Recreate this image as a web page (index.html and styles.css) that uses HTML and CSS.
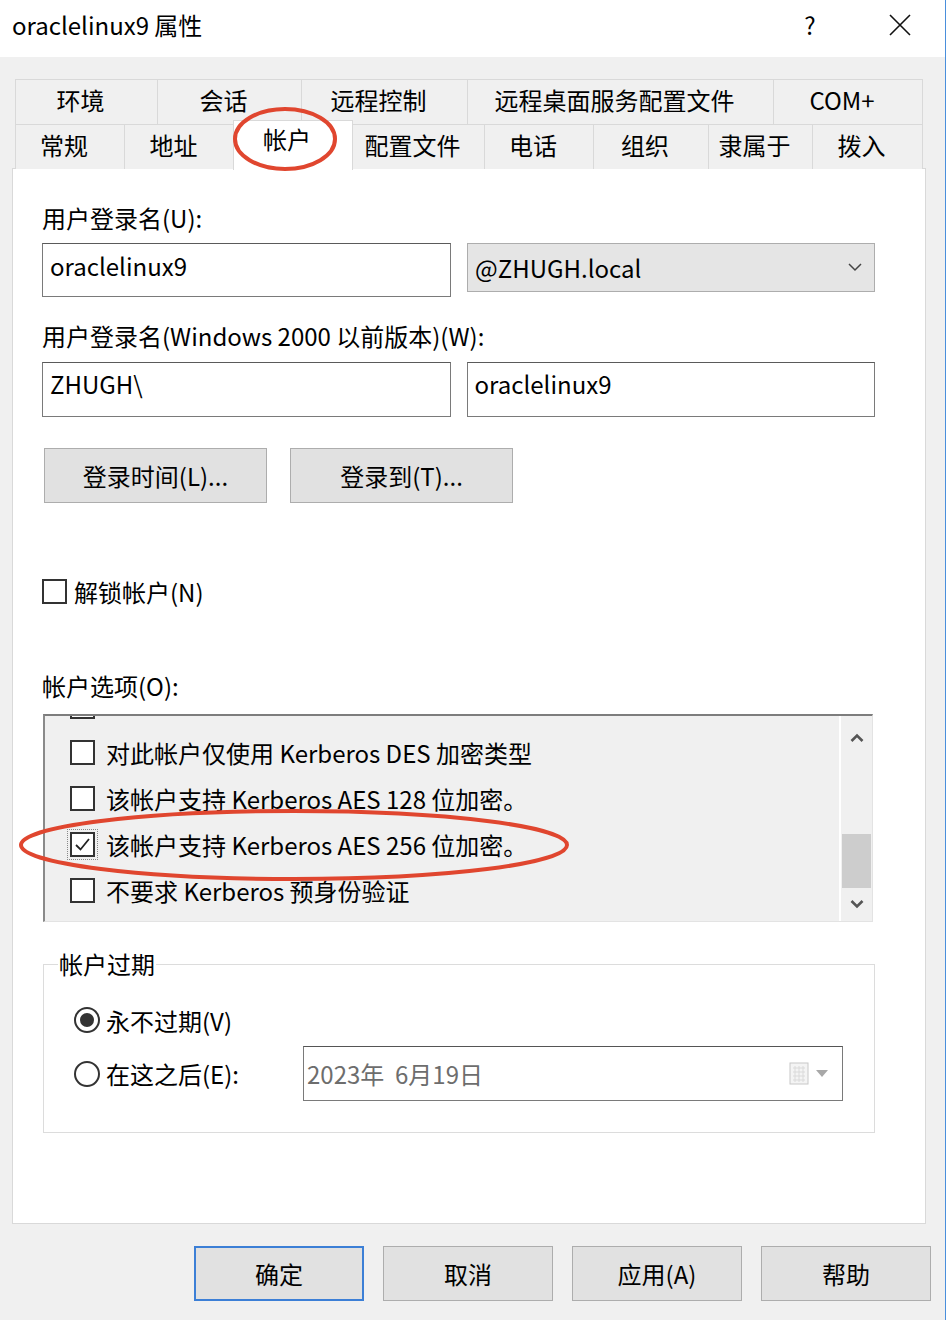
FILE: index.html
```html
<!DOCTYPE html>
<html lang="zh-CN">
<head>
  <meta charset="UTF-8" />
  <title>oraclelinux9 属性</title>
  <link rel="stylesheet" href="styles.css">
</head>
<body>
  <div class="window">
    <div class="titlebar">
      <span class="title">oraclelinux9 属性</span>
      <span class="cap-btn help">?</span>
      <span class="cap-btn">
        <svg width="22" height="22" viewBox="0 0 22 22"><path d="M1 1L21 21M21 1L1 21" stroke="#111" stroke-width="1.6"/></svg>
      </span>
    </div>

    <div class="client">
      <div class="tabs">
        <div class="tab-row row1">
          <div class="tab">环境</div>
          <div class="tab">会话</div>
          <div class="tab">远程控制</div>
          <div class="tab">远程桌面服务配置文件</div>
          <div class="tab">COM+</div>
        </div>
        <div class="tab-row row2">
          <div class="tab">常规</div>
          <div class="tab">地址</div>
          <div class="tab active">帐户</div>
          <div class="tab">配置文件</div>
          <div class="tab">电话</div>
          <div class="tab">组织</div>
          <div class="tab">隶属于</div>
          <div class="tab">拨入</div>
        </div>
      </div>

      <div class="panel">
        <div class="label first">用户登录名(U):</div>
        <div class="field-row">
          <input class="text" type="text" value="oraclelinux9" readonly />
          <div class="combo">
            <span>@ZHUGH.local</span>
            <svg width="14" height="9" viewBox="0 0 14 9"><path d="M1 1L7 7L13 1" fill="none" stroke="#444" stroke-width="1.5"/></svg>
          </div>
        </div>

        <div class="label second">用户登录名(Windows 2000 以前版本)(W):</div>
        <div class="field-row row-b">
          <input class="text" type="text" value="ZHUGH\" readonly />
          <input class="text" type="text" value="oraclelinux9" readonly />
        </div>

        <div class="btn-row">
          <button class="btn wide">登录时间(L)...</button>
          <button class="btn wide">登录到(T)...</button>
        </div>

        <div class="check-row">
          <span class="box"></span>
          <span class="check-text">解锁帐户(N)</span>
        </div>

        <div class="label section">帐户选项(O):</div>
        <div class="listbox">
          <div class="options">
            <div class="opt ghost"><span class="box"></span></div>
            <div class="opt"><span class="box"></span><span>对此帐户仅使用 Kerberos DES 加密类型</span></div>
            <div class="opt"><span class="box"></span><span>该帐户支持 Kerberos AES 128 位加密。</span></div>
            <div class="opt"><span class="box checked focus">
              <svg width="19" height="19" viewBox="0 0 19 19"><path d="M3 10L7.5 14.5L16 4" fill="none" stroke="#222" stroke-width="1.8"/></svg>
            </span><span>该帐户支持 Kerberos AES 256 位加密。</span></div>
            <div class="opt"><span class="box"></span><span>不要求 Kerberos 预身份验证</span></div>
          </div>
          <div class="scrollbar">
            <div class="sb-btn up">
              <svg width="14" height="9" viewBox="0 0 14 9"><path d="M1.5 8L7 2.5L12.5 8" fill="none" stroke="#555" stroke-width="2.6"/></svg>
            </div>
            <div class="sb-track"><div class="sb-thumb"></div></div>
            <div class="sb-btn down">
              <svg width="14" height="9" viewBox="0 0 14 9"><path d="M1.5 1L7 6.5L12.5 1" fill="none" stroke="#555" stroke-width="2.6"/></svg>
            </div>
          </div>
        </div>

        <fieldset class="group">
          <legend>帐户过期</legend>
          <div class="radio-row">
            <span class="radio on"></span>
            <span>永不过期(V)</span>
          </div>
          <div class="radio-row date-row">
            <div class="radio-label">
              <span class="radio"></span>
              <span>在这之后(E):</span>
            </div>
            <div class="date">
              <span>2023年&nbsp;&nbsp;6月19日</span>
              <span class="date-icon">
                <svg width="22" height="24" viewBox="0 0 22 24">
                  <rect x="1" y="1" width="18" height="21" fill="#f4f4f4" stroke="#c8c8c8"/>
                  <path d="M4 6h12M4 10h12M4 14h12M4 18h12M6 4v16M10 4v16M14 4v16" stroke="#dadada" stroke-width="1"/>
                </svg>
                <svg width="12" height="8" viewBox="0 0 12 8"><path d="M0 0H12L6 7Z" fill="#a8a8a8"/></svg>
              </span>
            </div>
          </div>
        </fieldset>
      </div>

      <div class="dlg-buttons">
        <button class="btn dlg primary">确定</button>
        <button class="btn dlg">取消</button>
        <button class="btn dlg">应用(A)</button>
        <button class="btn dlg">帮助</button>
      </div>
    </div>

    <svg class="marks" width="948" height="1320" viewBox="0 0 948 1320">
      <ellipse cx="285" cy="139" rx="50" ry="30" fill="none" stroke="#e0462f" stroke-width="4"/>
      <ellipse cx="294" cy="845" rx="273" ry="34" fill="none" stroke="#e0462f" stroke-width="4"/>
    </svg>
  </div>
</body>
</html>
```

FILE: styles.css
```css
body {
  margin: 0;
  background: #fff;
  font-family: "Noto Sans CJK SC", "Noto Sans", sans-serif;
  font-size: 24px;
  color: #000;
}
.window {
  position: relative;
  width: 946px;
  height: 1320px;
  box-sizing: border-box;
  background: #f0f0f0;
  border-right: 1px solid #4a8fdc;
}
.titlebar {
  height: 57px;
  background: #fff;
  display: flex;
  align-items: flex-start;
  padding: 10px 0 0 12px;
  box-sizing: border-box;
  line-height: 30px;
}
.cap-btn {
  width: 90px;
  height: 30px;
  display: flex;
  align-items: center;
  justify-content: center;
}
.cap-btn.help {
  margin-left: auto;
}
.client {
  padding: 22px 0 0 12px;
}
.tabs {
  margin-left: 3px;
  width: 908px;
}
.tab-row {
  display: grid;
}
.row1 {
  grid-template-columns: 142px 144px 166px 306px 150px;
  height: 45px;
}
.row2 {
  grid-template-columns: 109px 110px 118px 132px 109px 115px 104px 111px;
  height: 44px;
}
.tab {
  display: flex;
  align-items: center;
  justify-content: center;
  padding: 0 12px 5px 0;
  border: 1px solid #d9d9d9;
  border-right: none;
  border-bottom: none;
  background: #f0f0f0;
  white-space: nowrap;
}
.tab:last-child {
  border-right: 1px solid #d9d9d9;
}
.tab.active {
  position: relative;
  z-index: 1;
  margin: -4px -1px -1px;
  padding-bottom: 14px;
  background: #fff;
  border-right: 1px solid #d9d9d9;
}
.panel {
  width: 914px;
  height: 1056px;
  box-sizing: border-box;
  background: #fff;
  border: 1px solid #d9d9d9;
  padding: 0 50px 0 29px;
}
.label {
  line-height: 30px;
}
.label.first {
  margin-top: 34px;
}
.label.second {
  margin-top: 24px;
}
.label.section {
  margin-top: 65px;
}
.field-row {
  display: flex;
  align-items: flex-start;
  gap: 16px;
  margin-top: 10px;
}
.field-row.row-b {
  margin-top: 11px;
}
.text {
  width: 409px;
  height: 54px;
  box-sizing: border-box;
  border: 1px solid #7a7a7a;
  border-top-color: #5a5a5a;
  padding: 0 7px 9px;
  font: inherit;
  color: #000;
  background: #fff;
  outline: none;
}
.row-b .text {
  height: 55px;
  padding-bottom: 12px;
}
.combo {
  width: 408px;
  height: 49px;
  box-sizing: border-box;
  background: #e5e5e5;
  border: 1px solid #adadad;
  display: flex;
  align-items: center;
  justify-content: space-between;
  padding: 0 12px 0 7px;
}
.btn {
  font: inherit;
  color: #000;
  background: #e1e1e1;
  border: 1px solid #adadad;
  padding: 0;
}
.btn-row {
  display: flex;
  gap: 23px;
  margin: 31px 0 0 2px;
}
.btn.wide {
  width: 223px;
  height: 55px;
}
.check-row {
  display: flex;
  align-items: center;
  height: 30px;
  margin-top: 73px;
}
.check-text {
  margin-left: 7px;
}
.box {
  width: 25px;
  height: 25px;
  box-sizing: border-box;
  border: 2px solid #333;
  background: #fff;
  display: flex;
  align-items: center;
  justify-content: center;
  flex-shrink: 0;
}
.box.focus {
  outline: 1px dotted #888;
  outline-offset: 2px;
}
.listbox {
  display: flex;
  width: 830px;
  height: 208px;
  box-sizing: border-box;
  margin: 13px 0 0 1px;
  background: #f0f0f0;
  border-top: 2px solid #7d7d7d;
  border-left: 2px solid #8a8a8a;
  border-right: 1px solid #e3e3e3;
  border-bottom: 1px solid #e3e3e3;
}
.options {
  flex: 1;
  overflow: hidden;
}
.opt {
  height: 46px;
  display: flex;
  align-items: center;
  padding-left: 25px;
  white-space: nowrap;
}
.opt .box {
  margin-right: 11px;
}
.opt.ghost {
  margin-top: -33px;
}
.scrollbar {
  width: 31px;
  border-left: 2px solid #fff;
  display: flex;
  flex-direction: column;
}
.sb-btn {
  display: flex;
  align-items: center;
  justify-content: center;
}
.sb-btn.up {
  height: 42px;
}
.sb-btn.down {
  height: 33px;
}
.sb-track {
  flex: 1;
  display: flex;
  flex-direction: column;
  justify-content: flex-end;
}
.sb-thumb {
  height: 54px;
  margin: 0 1px 0 1px;
  background: #cdcdcd;
}
.group {
  width: 832px;
  box-sizing: border-box;
  margin: 27px 0 0 1px;
  padding: 26px 31px 31px 30px;
  border: 1px solid #dcdcdc;
  min-width: 0;
}
.group legend {
  line-height: 30px;
  padding: 0 1px;
  margin-left: -16px;
}
.radio-row {
  display: flex;
  align-items: center;
  height: 30px;
}
.radio-label {
  display: flex;
  align-items: center;
}
.radio {
  width: 26px;
  height: 26px;
  box-sizing: border-box;
  border: 2px solid #333;
  border-radius: 50%;
  background: #fff;
  margin-right: 6px;
  display: flex;
  align-items: center;
  justify-content: center;
}
.radio.on::after {
  content: "";
  width: 14px;
  height: 14px;
  border-radius: 50%;
  background: #333;
}
.date-row {
  height: 55px;
  margin-top: 11px;
  justify-content: space-between;
}
.date {
  width: 540px;
  height: 55px;
  box-sizing: border-box;
  border: 1px solid #7a7a7a;
  border-top-color: #555;
  display: flex;
  align-items: center;
  justify-content: space-between;
  padding: 0 14px 0 3px;
  color: #6d6d6d;
  background: #fff;
}
.date-icon {
  display: flex;
  align-items: center;
  gap: 5px;
}
.dlg-buttons {
  display: flex;
  justify-content: flex-end;
  gap: 19px;
  margin-top: 22px;
  padding-right: 14px;
}
.btn.dlg {
  width: 170px;
  height: 55px;
}
.btn.primary {
  border: 2px solid #3c7fd6;
}
.marks {
  position: absolute;
  top: 0;
  left: 0;
  z-index: 2;
  pointer-events: none;
}
```
